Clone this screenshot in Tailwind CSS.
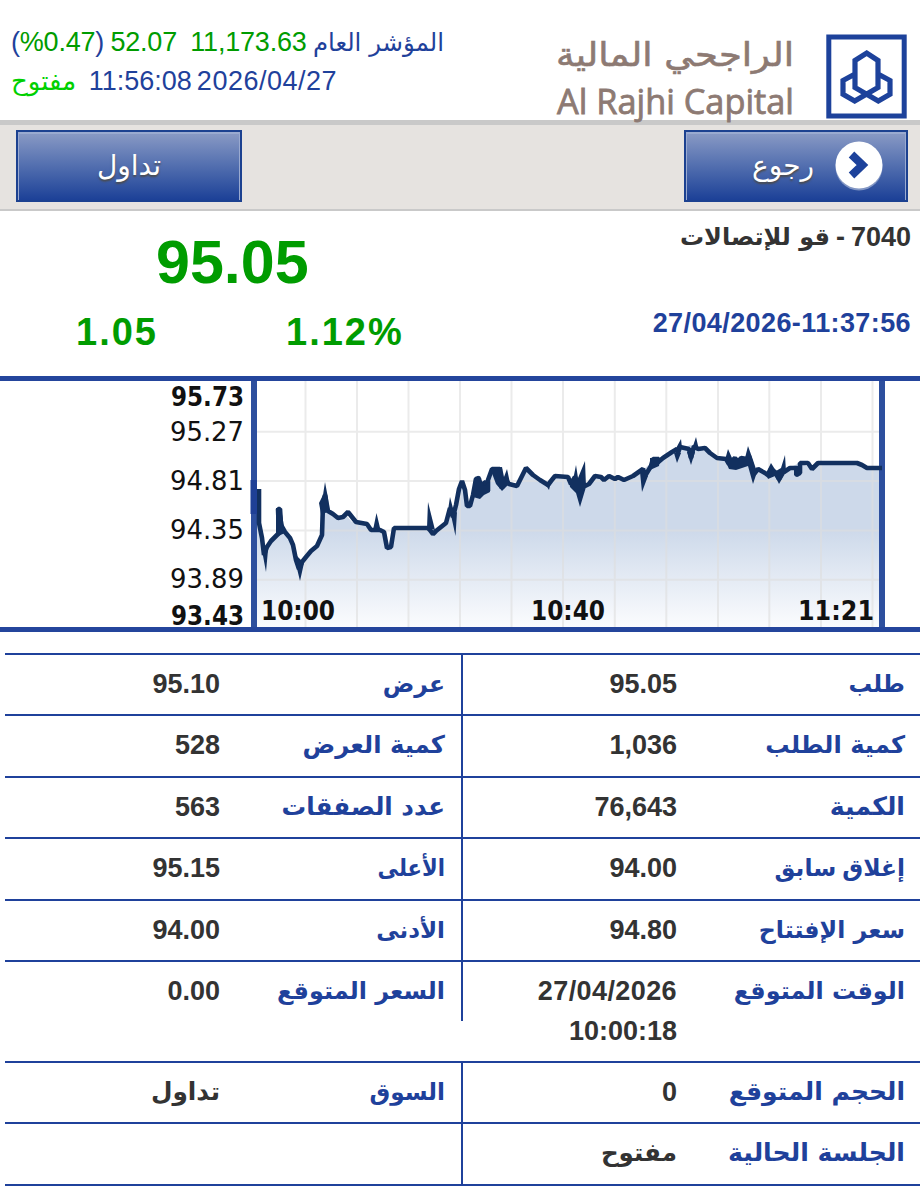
<!DOCTYPE html>
<html lang="ar">

<head>
    <meta charset="UTF-8">
    <meta name="viewport" content="width=device-width, initial-scale=1.0">
    <script src="https://cdn.jsdelivr.net/npm/@tailwindcss/browser@4"></script>
    <title>الراجحي المالية</title>
</head>

<body class="w-[920px] h-[1199px] overflow-hidden bg-white font-['Liberation_Sans','DejaVu_Sans',sans-serif] text-[#333333]">
    <!-- header -->
    <header class="flex justify-between h-[120px] text-[#1f419b]">
        <div class="pl-[11px] pt-[23px] text-[27px] leading-[39px]">
            <div class="flex w-[433px] justify-between whitespace-nowrap tracking-[-0.2px]">
                <span>(<span class="text-[#009c00]">%0.47</span>)</span>
                <span class="text-[#009c00]">52.07</span>
                <span class="text-[#009c00] ml-[7px]">11,173.63</span>
                <span dir="rtl" class="font-['DejaVu_Sans'] text-[24.400px] tracking-normal">المؤشر العام</span>
            </div>
            <div class="flex w-[326px] justify-between whitespace-nowrap">
                <span dir="rtl" class="font-['DejaVu_Sans'] text-[26px] text-[#00d000]">مفتوح</span>
                <span class="flex gap-[5px]"><span>11:56:08</span><span class="tracking-[0.5px]">2026/04/27</span></span>
            </div>
        </div>
        <svg class="mr-[12px] mt-[30px] overflow-visible" width="352" height="90" viewBox="556 30 352 90">
            <g fill="#8d7a73" stroke="#8d7a73">
                <text x="794" y="66" direction="rtl" textLength="238" lengthAdjust="spacingAndGlyphs" font-family="DejaVu Sans" font-size="33" stroke-width=".6">الراجحي المالية</text>
                <text x="557" y="114" textLength="237" lengthAdjust="spacingAndGlyphs" font-family="Open Sans" font-size="34" stroke-width=".8">Al Rajhi Capital</text>
            </g>
            <rect x="828.8" y="37" width="75.400" height="79" fill="none" stroke="#1d429b" stroke-width="5" />
            <path fill="none" stroke="#1d429b" stroke-width="5.200" d="M878 74l12 6.500v13.800l-11.700 6.700L855 87.500V60.500l11.700-7.500 11.300 7.500V87.500L854.700 101 843 94.300V80.500L855 74" />
        </svg>
    </header>

    <!-- button bar -->
    <nav class="flex justify-between h-[91px] pl-4 pr-3 pt-[5px] bg-[#e6e3e0] border-t-[5px] border-b-2 border-[#c9c9c9]">
        <button class="flex items-center justify-center w-[226px] h-[72px] border-2 border-[#1c4190] bg-linear-to-b from-[#8b9bc5] to-[#1c4097] text-white font-['DejaVu_Sans'] text-[28px] shadow-[inset_0_1px_0_1px_#9aaad0]">
            <span dir="rtl" class="[text-shadow:0_2px_2px_#4b4b4b]">تداول</span>
        </button>
        <button class="flex items-center justify-end gap-[21px] w-[224px] h-[72px] pr-[23px] border-2 border-[#1c4190] bg-linear-to-b from-[#8b9bc5] to-[#1c4097] text-white font-['DejaVu_Sans'] text-[28px] shadow-[inset_0_1px_0_1px_#9aaad0]">
            <span dir="rtl" class="[text-shadow:0_2px_2px_#4b4b4b]">رجوع</span>
            <svg width="48" height="50" viewBox="0 0 48 50">
                <circle cx="24" cy="26" r="23.500" fill="#8296c4" />
                <circle cx="24" cy="24" r="23.500" fill="#ffffff" />
                <path d="M16.500 13.500l11 10.500-11 10.500" fill="none" stroke="#1d429b" stroke-width="8" />
            </svg>
        </button>
    </nav>

    <!-- quote -->
    <section class="flex justify-between h-[165px] font-bold">
        <div class="w-[460px] text-[#009c00]">
            <div class="pl-[156px] pt-[19px] text-[61px] leading-[64px]">95.05</div>
            <div class="flex pl-[76px] pt-[14px] text-[38px] leading-[48px] tracking-[2px]">
                <span class="w-[210px]">1.05</span>
                <span>1.12%</span>
            </div>
        </div>
        <div class="flex flex-col items-end pr-[9px] text-[27px] whitespace-nowrap">
            <div class="flex gap-[6px] pt-[6px] leading-[40px]">
                <span dir="rtl" class="font-['DejaVu_Sans'] text-[24px]">قو للإتصالات</span>
                <span>-</span>
                <span>7040</span>
            </div>
            <div class="pt-[46px] leading-[40px] tracking-[0.4px] text-[#1f419b]">27/04/2026-11:37:56</div>
        </div>
    </section>

    <!-- intraday chart -->
    <section class="h-[256px] border-y-[5px] border-[#24459c]">
        <svg class="block overflow-visible" width="920" height="246" viewBox="0 381 920 246">
            <defs>
                <linearGradient id="area" gradientUnits="userSpaceOnUse" x1="0" y1="530" x2="0" y2="627">
                    <stop offset="0" stop-color="#cdd9ea" />
                    <stop offset="1" stop-color="#fbfcfe" />
                </linearGradient>
            </defs>
            <path fill="url(#area)" d="M254 627V489H260V535L265 550L272 541L280 533L288 534L294 550L299 566L306 555L317 545L323 534L325 510L332 515L338 518L345 514L352 522L367 523L371 532H381L388 545L394 528H430L433 534L447 522L454 510L461 481L469 508L477 483L486 482L492 468L500 475L512 485L518 484L526 468L547 485L555 477L567 477L580 490L594 476L604 480L615 477L624 480L643 470L655 459L678 451L690 445L697 448L710 453L720 459L745 460L755 469L770 474L785 470L799 463L809 467L818 463H857L869 468H882V627Z" />
            <path fill="none" stroke="#dddddd" stroke-opacity=".6" stroke-width="2" d="M305.500 381V627M357 381V627M408.500 381V627M460 381V627M511.500 381V627M563 381V627M614.800 381V627M666.300 381V627M718 381V627M769.300 381V627M821 381V627M872.500 381V627M257 431.700H880M257 481H880M257 530.400H880M257 579.700H880" />
            <path fill="none" stroke="#2d4f9e" stroke-width="6" d="M254 381V627M882 381V627" />
            <path fill="none" stroke="#12305f" stroke-width="4.600" stroke-linejoin="bevel" d="M259 489V523L262 538L264 555L267 547L271 541L275 537L279 533L278 509L280 509L281 525L285 532L290 538L293 545L296 560L299 569L302 562L306 557L311 551L317 546L322 535L323 504L325 495L328 511L333 514L338 518L343 517L348 512L352 517L356 522L367 524L371 530H376H380L384 532L387 548L391 547L394 528H428L430 530L433 534L436 531L446 523L450 508L453 517L456 505L459 489L462 481L465 490L467 506L470 506L473 495L476 479L479 478L478 490L481 494L483 484L486 482L488 491V480L492 469H500L498 479L502 488L504 478L509 484L517 486L521 478L526 468L533 475L540 480L548 485L551 481L555 476L568 477L571 484L575 477L577 489L580 492L582 482L585 486L589 484L595 476L601 477L604 480L609 476L615 479L618 477L624 480L633 476L643 469L645 476L651 466L653 459H659L656 464L663 458L672 452L677 449L678 453L680 447L689 449L691 458L694 446L698 449L705 448L710 453L717 458L726 459L729 464L735 458L738 463L741 458L747 459L749 456L754 474L758 469L765 473L769 476L771 469L775 472L779 479L783 470L784 472L790 468L797 468V474L800 473V463H808L812 469L818 463H857L862 465L867 468H882" />
            <!-- thin spikes and dense stretches -->
            <path fill="#12305f" d="M261 545l5 27 2-22ZM276 508h5l4 25-9 4ZM293 552l7 29 4-18ZM319 503l4-8 2-13 3 16 1 14-8 2ZM373 530l3.500-17 4 17ZM427 528l1-26 5 20 2 8ZM447 517l3-20 4 15ZM451 515l4.500 21 1.500-24ZM474 478l6-2 4 10 5-4 1 10-6 3-4 4-7-2ZM490 468l12-1 2 10 3-8 3 14-8 8-6-7ZM545 484l4 6 2-8ZM569 480h4l3-15 2 13 7-17 1 26-6 20-4-14-6-6ZM640 472l2 20 6-16ZM650 458h10l-1 8-9 4ZM674 452l7-13 1 9ZM674 453l3 10 4-10ZM687 452l4 13 4-13ZM692 449l4-12 3 13ZM725 460l3-11 4 9h13l3-12 5 14 4 12-4 12-5-18-12 4-7-1ZM766 473l5-10 5 8 5-3 4-13 1 17-7 12-4-8-7 3ZM794 468v7q3 4 6 0l2-7Z" />
            <path fill="#1f4096" d="M250.500 480h6.500v34h-6.500Z" />
            <g font-family="DejaVu Sans" font-size="26" fill="#111111">
                <text x="171" y="406" font-weight="bold" textLength="73" lengthAdjust="spacingAndGlyphs">95.73</text>
                <text x="170" y="440.500" textLength="74" lengthAdjust="spacingAndGlyphs">95.27</text>
                <text x="170" y="489.500" textLength="74" lengthAdjust="spacingAndGlyphs">94.81</text>
                <text x="170" y="539" textLength="74" lengthAdjust="spacingAndGlyphs">94.35</text>
                <text x="170" y="588" textLength="74" lengthAdjust="spacingAndGlyphs">93.89</text>
                <text x="171" y="624.500" font-weight="bold" textLength="73" lengthAdjust="spacingAndGlyphs">93.43</text>
                <text x="261" y="619.500" font-weight="bold" textLength="74" lengthAdjust="spacingAndGlyphs">10:00</text>
                <text x="531" y="619.500" font-weight="bold" textLength="74" lengthAdjust="spacingAndGlyphs">10:40</text>
                <text x="798" y="619.500" font-weight="bold" textLength="76" lengthAdjust="spacingAndGlyphs">11:21</text>
            </g>
        </svg>
    </section>

    <!-- details -->
    <section dir="rtl" class="mt-[20.500px] ml-[5px] border-b-[2.500px] border-[#1f419b] text-[27px] leading-[40px] font-bold whitespace-nowrap">
        <div class="flex h-[61.500px] border-t-[2.500px] border-[#1f419b]">
            <div class="flex w-[459px] pt-[9px] pr-[15px] border-l-[2.500px] border-[#1f419b]">
                <span class="w-[228px] font-['DejaVu_Sans'] text-[23.500px] text-[#1f419b]">طلب</span><span>95.05</span>
            </div>
            <div class="flex pt-[9px] pr-[16px]">
                <span class="w-[225px] font-['DejaVu_Sans'] text-[23.500px] text-[#1f419b]">عرض</span><span>95.10</span>
            </div>
        </div>
        <div class="flex h-[61.500px] border-t-[2.500px] border-[#1f419b]">
            <div class="flex w-[459px] pt-[9px] pr-[15px] border-l-[2.500px] border-[#1f419b]">
                <span class="w-[228px] font-['DejaVu_Sans'] text-[24.200px] text-[#1f419b]">كمية الطلب</span><span>1,036</span>
            </div>
            <div class="flex pt-[9px] pr-[16px]">
                <span class="w-[225px] font-['DejaVu_Sans'] text-[24.300px] text-[#1f419b]">كمية العرض</span><span>528</span>
            </div>
        </div>
        <div class="flex h-[61.500px] border-t-[2.500px] border-[#1f419b]">
            <div class="flex w-[459px] pt-[9px] pr-[15px] border-l-[2.500px] border-[#1f419b]">
                <span class="w-[228px] font-['DejaVu_Sans'] text-[25.200px] text-[#1f419b]">الكمية</span><span>76,643</span>
            </div>
            <div class="flex pt-[9px] pr-[16px]">
                <span class="w-[225px] font-['DejaVu_Sans'] text-[24.600px] text-[#1f419b]">عدد الصفقات</span><span>563</span>
            </div>
        </div>
        <div class="flex h-[61.500px] border-t-[2.500px] border-[#1f419b]">
            <div class="flex w-[459px] pt-[9px] pr-[15px] border-l-[2.500px] border-[#1f419b]">
                <span class="w-[228px] font-['DejaVu_Sans'] text-[23.400px] [word-spacing:-2px] text-[#1f419b]">إغلاق سابق</span><span>94.00</span>
            </div>
            <div class="flex pt-[9px] pr-[16px]">
                <span class="w-[225px] font-['DejaVu_Sans'] text-[24px] origin-right scale-x-[0.88] text-[#1f419b]">الأعلى</span><span>95.15</span>
            </div>
        </div>
        <div class="flex h-[61.500px] border-t-[2.500px] border-[#1f419b]">
            <div class="flex w-[459px] pt-[9px] pr-[15px] border-l-[2.500px] border-[#1f419b]">
                <span class="w-[228px] font-['DejaVu_Sans'] text-[23.700px] text-[#1f419b]">سعر الإفتتاح</span><span>94.80</span>
            </div>
            <div class="flex pt-[9px] pr-[16px]">
                <span class="w-[225px] font-['DejaVu_Sans'] text-[23px] text-[#1f419b]">الأدنى</span><span>94.00</span>
            </div>
        </div>
        <div class="flex h-[100.500px] border-t-[2.500px] border-[#1f419b]">
            <div class="flex w-[459px] h-[59px] pt-[9px] pr-[15px] border-l-[2.500px] border-[#1f419b]">
                <span class="w-[228px] font-['DejaVu_Sans'] text-[23.900px] text-[#1f419b]">الوقت المتوقع</span><span><span class="tracking-[0.4px]">27/04/2026</span><br>10:00:18</span>
            </div>
            <div class="flex pt-[9px] pr-[16px]">
                <span class="w-[225px] font-['DejaVu_Sans'] text-[23.900px] text-[#1f419b]">السعر المتوقع</span><span>0.00</span>
            </div>
        </div>
        <div class="flex h-[61.500px] border-t-[2.500px] border-[#1f419b]">
            <div class="flex w-[459px] pt-[9px] pr-[15px] border-l-[2.500px] border-[#1f419b]">
                <span class="w-[228px] font-['DejaVu_Sans'] text-[25px] text-[#1f419b]">الحجم المتوقع</span><span>0</span>
            </div>
            <div class="flex pt-[9px] pr-[16px]">
                <span class="w-[225px] font-['DejaVu_Sans'] text-[23.200px] text-[#1f419b]">السوق</span><span class="font-['DejaVu_Sans'] text-[24.800px]">تداول</span>
            </div>
        </div>
        <div class="flex h-[61.500px] border-t-[2.500px] border-[#1f419b]">
            <div class="flex w-[459px] pt-[9px] pr-[15px] border-l-[2.500px] border-[#1f419b]">
                <span class="w-[228px] font-['DejaVu_Sans'] text-[25.200px] text-[#1f419b]">الجلسة الحالية</span><span class="font-['DejaVu_Sans'] text-[24.600px]">مفتوح</span>
            </div>
        </div>
    </section>
</body>

</html>
